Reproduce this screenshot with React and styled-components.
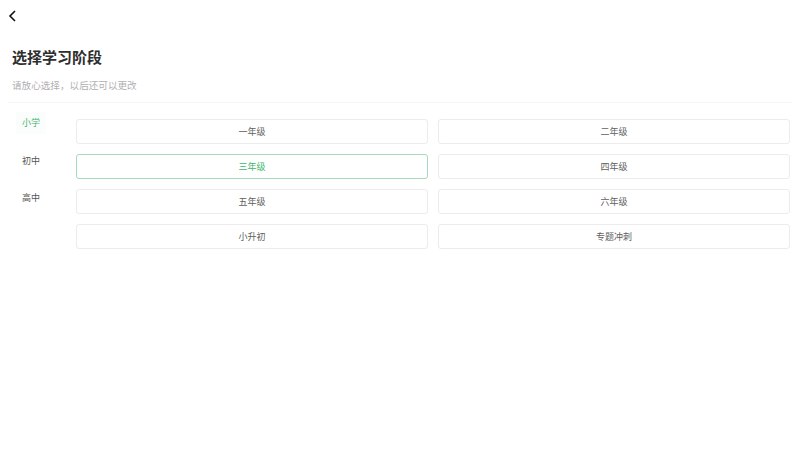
import React, { useState } from 'react';
import styled, { createGlobalStyle } from 'styled-components';

const GlobalStyle = createGlobalStyle`
  html, body {
    margin: 0;
    padding: 0;
    background: #fff;
    font-family: "Noto Sans CJK SC", "Noto Sans", sans-serif;
  }
`;

const Page = styled.div`
  width: 800px;
  height: 450px;
  background: #fff;
  box-sizing: border-box;
`;

const TopBar = styled.div`
  height: 32px;
  display: flex;
  align-items: center;
  padding-left: 5px;
`;

const BackButton = styled.button`
  border: none;
  background: none;
  padding: 0;
  width: 14px;
  height: 14px;
  display: flex;
  align-items: center;
  justify-content: center;
  cursor: pointer;
`;

const Header = styled.div`
  padding: 13px 12px 0;
`;

const Title = styled.h1`
  margin: 0;
  font-size: 15px;
  line-height: 24px;
  font-weight: 700;
  color: #2e2e2e;
`;

const Subtitle = styled.p`
  margin: 8px 0 0;
  font-size: 9.6px;
  line-height: 16px;
  color: #b0b0b0;
`;

const Divider = styled.div`
  margin: 9px 8px 0;
  height: 1px;
  background: #f5f5f5;
`;

const Body = styled.div`
  display: flex;
  padding: 16px 10px 0 0;
`;

const Stages = styled.div`
  width: 76px;
  flex-shrink: 0;
  display: flex;
  flex-direction: column;
  gap: 15.5px;
  margin-top: -7px;
`;

const StageItem = styled.div`
  align-self: flex-start;
  margin-left: 16px;
  padding: 3px 6px;
  font-size: 9px;
  line-height: 16px;
  color: ${(p) => (p.$active ? '#3fb66c' : '#555')};
  background: ${(p) => (p.$active ? '#fafdfb' : 'transparent')};
  cursor: pointer;
`;

const Grid = styled.div`
  flex: 1;
  display: grid;
  grid-template-columns: 1fr 1fr;
  grid-auto-rows: 25px;
  gap: 10px;
`;

const GradeButton = styled.button`
  border: 1px solid ${(p) => (p.$active ? '#a8d9bb' : '#ececec')};
  border-radius: 3px;
  background: #fff;
  font-family: inherit;
  font-size: 9px;
  color: ${(p) => (p.$active ? '#3fb66c' : '#606060')};
  display: flex;
  align-items: center;
  justify-content: center;
  padding: 0;
  cursor: pointer;
`;

const stages = ['小学', '初中', '高中'];
const grades = ['一年级', '二年级', '三年级', '四年级', '五年级', '六年级', '小升初', '专题冲刺'];

export default function App() {
  const [stage, setStage] = useState('小学');
  const [grade, setGrade] = useState('三年级');

  return (
    <Page>
      <GlobalStyle />
      <TopBar>
        <BackButton>
          <svg width="9" height="12" viewBox="0 0 9 12">
            <path d="M7 1 L2 6 L7 11" fill="none" stroke="#111" strokeWidth="1.6" />
          </svg>
        </BackButton>
      </TopBar>
      <Header>
        <Title>选择学习阶段</Title>
        <Subtitle>请放心选择，以后还可以更改</Subtitle>
      </Header>
      <Divider />
      <Body>
        <Stages>
          {stages.map((s) => (
            <StageItem key={s} $active={s === stage} onClick={() => setStage(s)}>
              {s}
            </StageItem>
          ))}
        </Stages>
        <Grid>
          {grades.map((g) => (
            <GradeButton key={g} $active={g === grade} onClick={() => setGrade(g)}>
              {g}
            </GradeButton>
          ))}
        </Grid>
      </Body>
    </Page>
  );
}
